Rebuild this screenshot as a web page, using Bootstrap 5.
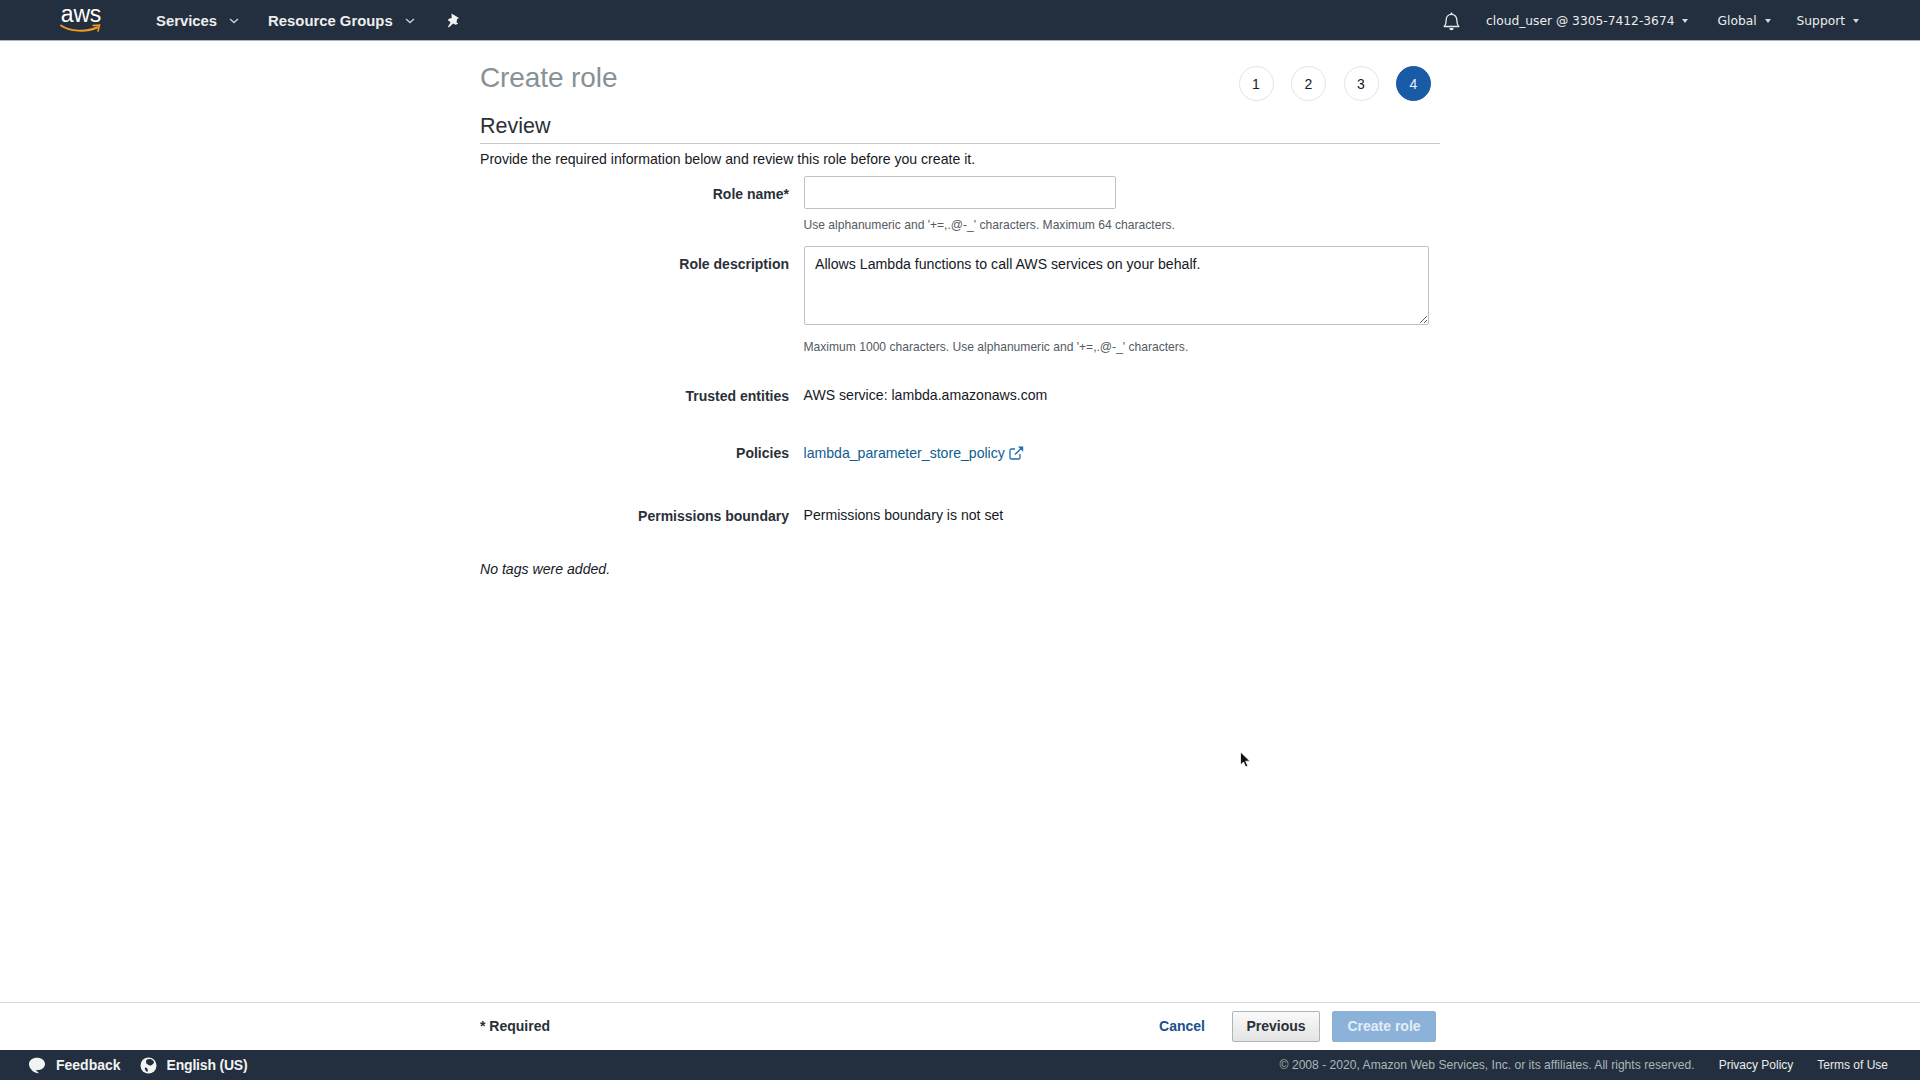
<!DOCTYPE html>
<html lang="en">
<head>
<meta charset="utf-8">
<title>Create role</title>
<link href="https://cdn.jsdelivr.net/npm/bootstrap@5.3.0/dist/css/bootstrap.min.css" rel="stylesheet">
<style>
html,body{height:100%}
body{font-family:"Liberation Sans",Arial,sans-serif;font-size:14.1px;color:#16191f;background:#fff;overflow:hidden}
.shell{height:1080px;position:relative}
.topbar{height:41px;background:#232f3e;border-bottom:1px solid #aab7b8;color:#fff;flex:none}
.logo-box{margin-left:60px;width:42px;height:33px;position:relative;margin-top:-1px}
.logo-word{font-size:23px;line-height:23px;letter-spacing:-.2px;color:#fff;text-align:center;display:block}
.logo-smile{position:absolute;left:0;top:20px}
.svc{font-weight:700;font-size:14.85px;color:#eee;position:relative;top:1px}
.svc-one{margin-left:54px}
.svc-two{margin-left:29px}
.chev{margin-left:12px;position:relative;top:1px}
.pin{margin-left:31px}
.acct{font-family:"DejaVu Sans",sans-serif;font-size:12.25px;color:#eaeded}
.tri{display:inline-block;width:0;height:0;border-left:3.5px solid transparent;border-right:3.5px solid transparent;border-top:4px solid #d5dbdb;margin-left:8px;vertical-align:2px}
.acct-list{margin-right:61px;gap:26px;position:relative;top:1px}
.acct-first{margin-right:3px}
.bell{margin-right:26px;position:relative;top:1px}
.content-col{width:960px;margin-left:480px}
.head-line{height:103px;border-bottom:1px solid #c9c9c9;position:relative}
.page-title{font-size:28px;font-weight:400;color:#879196;line-height:34px;margin:20px 0 0;letter-spacing:-.1px}
.page-sub{font-size:21.5px;font-weight:400;color:#2b3038;line-height:26px;margin:18px 0 0}
.steps{gap:17.5px;padding-right:9px;padding-top:25px}
.step-dot{width:35px;height:35px;border:1px solid #e1e4e6;border-radius:50%;font-size:14px;color:#16191f;line-height:1}
.step-on{background:#1a5ba8;border-color:#1a5ba8;color:#e8f1fa}
.intro{line-height:20px;margin:5px 0 0;color:#16191f}
.lbl{width:309px;margin-right:15px;text-align:right;font-weight:700;font-size:14px;flex:none;color:#2b3038}
.val{flex:1 1 auto;min-width:0}
.row-name{margin-top:7px}
.row-name .lbl{padding-top:9px;line-height:18px}
.fld-name{width:312px;height:33px;border:1px solid #bcc3c6;border-radius:2px;background:#fff;display:block}
.hint{font-size:12.08px;line-height:16px;color:#545b64;margin-left:-.5px}
.hint-a{margin-top:8px}
.row-desc{margin-top:13px}
.row-desc .lbl{padding-top:8px;line-height:20px}
.fld-desc{width:625px;height:79px;border:1px solid #bcc3c6;border-radius:2px;padding:7px 10px;font-size:14.15px;line-height:20px;color:#16191f;display:block;background:#fff;font-family:inherit}
.hint-b{margin-top:14px}
.row-plain{line-height:20px}
.row-plain .val{margin-left:-.5px}
.row-trust{margin-top:30px}
.row-pol{margin-top:37px}
.row-perm{margin-top:42px}
.row-perm .lbl,.row-trust .lbl{padding-top:1px}
.pol-link{color:#0f5d92;text-decoration:none}
.ext{margin-left:4px;vertical-align:-2px}
.no-tags{font-style:italic;margin:33px 0 0;line-height:20px}
.main-area{flex:1 1 auto;min-height:0}
.actbar{height:48px;border-top:1px solid #d5dbdb;flex:none}
.actbar-in{width:960px;margin-left:480px;padding-right:4px;height:100%}
.req{font-weight:700;font-size:14px;color:#2b3038}
.cancel-link{color:#1a4f8b;font-weight:700;font-size:14px;text-decoration:none;margin-right:27px}
.btn-prev{width:88px;height:31px;padding:0;font-size:14px;font-weight:700;color:#2b3038;border:1px solid #aab7b8;border-radius:2px;background:linear-gradient(#fafafa,#e4e4e4);margin-right:12px}
.btn-make{width:104px;height:31px;padding:0;font-size:14px;font-weight:700;color:#e4edf6;border:1px solid #8cb2da;border-radius:2px;background:#8cb2da}
.foot{height:30px;background:#232f3e;flex:none;padding:0 32px 0 28px}
.foot-left{font-weight:700;color:#f2f3f3;font-size:14px}
.foot-lang{letter-spacing:-.2px}
.foot-gap{margin-left:19px}
.foot-icon{margin-right:10px}
.copy{font-size:12.12px;color:#aab7b8;margin-right:24px}
.foot-link{font-size:12px;color:#eaeded;text-decoration:none}
.foot-link+.foot-link{margin-left:24px}
.cursor-mark{position:absolute;left:1239px;top:751px}
</style>
</head>
<body>
<div class="shell d-flex flex-column">
  <nav class="topbar d-flex align-items-center">
    <div class="logo-box">
      <span class="logo-word">aws</span>
      <svg class="logo-smile" width="42" height="12" viewBox="0 0 42 12"><path d="M1 2.500C10 8.500 26 9.500 37 4.500" fill="none" stroke="#f39c1f" stroke-width="2" stroke-linecap="round"/><path d="M33 2.500L39.500 2.200L38 8" fill="none" stroke="#f39c1f" stroke-width="1.600" stroke-linecap="round"/></svg>
    </div>
    <span class="svc svc-one">Services</span>
    <svg class="chev" width="10" height="6" viewBox="0 0 10 6"><path d="M1 1l4 3.500L9 1" fill="none" stroke="#c8cdd2" stroke-width="1.500"/></svg>
    <span class="svc svc-two">Resource Groups</span>
    <svg class="chev" width="10" height="6" viewBox="0 0 10 6"><path d="M1 1l4 3.500L9 1" fill="none" stroke="#c8cdd2" stroke-width="1.500"/></svg>
    <svg class="pin" width="14" height="15" viewBox="0 0 14 15"><path d="M5.500.5l7.500 4.500-1.900 1-.6 3.300 1.700 1.500-2.700.9-2.300-1.200L2.800 14.400l-.8-.6 2.600-4.600L1.900 7.300l.9-1.500 2.900-.9z" fill="#f2f3f3"/></svg>
    <div class="ms-auto d-flex align-items-center">
      <svg class="bell" width="17" height="19" viewBox="0 0 17 19"><path d="M1.200 14.500c1.600-1.600 2-3 2-6.500 0-3.200 2.200-5.600 5.300-5.600s5.300 2.400 5.300 5.600c0 3.500.4 4.900 2 6.500z" fill="none" stroke="#eaeded" stroke-width="1.300" stroke-linejoin="round"/><path d="M6.300 16h4.400a2.200 2.200 0 0 1-4.400 0z" fill="#eaeded"/><circle cx="8.500" cy="1.500" r="1" fill="#eaeded"/></svg>
      <div class="acct-list d-flex acct">
        <span class="acct-first">cloud_user @ 3305-7412-3674<i class="tri"></i></span>
        <span>Global<i class="tri"></i></span>
        <span>Support<i class="tri"></i></span>
      </div>
    </div>
  </nav>

  <main class="main-area">
    <div class="content-col">
      <div class="head-line d-flex justify-content-between">
        <div>
          <h1 class="page-title">Create role</h1>
          <h2 class="page-sub">Review</h2>
        </div>
        <div class="steps d-flex align-items-start">
          <div class="step-dot d-flex align-items-center justify-content-center">1</div>
          <div class="step-dot d-flex align-items-center justify-content-center">2</div>
          <div class="step-dot d-flex align-items-center justify-content-center">3</div>
          <div class="step-dot step-on d-flex align-items-center justify-content-center">4</div>
        </div>
      </div>
      <p class="intro">Provide the required information below and review this role before you create it.</p>

      <div class="d-flex row-name">
        <div class="lbl">Role name*</div>
        <div class="val">
          <input class="fld-name" type="text" aria-label="Role name">
          <div class="hint hint-a">Use alphanumeric and '+=,.@-_' characters. Maximum 64 characters.</div>
        </div>
      </div>
      <div class="d-flex row-desc">
        <div class="lbl">Role description</div>
        <div class="val">
          <textarea class="fld-desc" aria-label="Role description">Allows Lambda functions to call AWS services on your behalf.</textarea>
          <div class="hint hint-b">Maximum 1000 characters. Use alphanumeric and '+=,.@-_' characters.</div>
        </div>
      </div>
      <div class="d-flex row-plain row-trust">
        <div class="lbl">Trusted entities</div>
        <div class="val">AWS service: lambda.amazonaws.com</div>
      </div>
      <div class="d-flex row-plain row-pol">
        <div class="lbl">Policies</div>
        <div class="val"><a class="pol-link" href="#">lambda_parameter_store_policy</a><svg class="ext" width="15" height="14" viewBox="0 0 15 14"><path d="M11 8v3.600a1.400 1.400 0 0 1-1.400 1.400H2.400A1.400 1.400 0 0 1 1 11.600V4.400A1.400 1.400 0 0 1 2.400 3H6" fill="none" stroke="#1a6bb0" stroke-width="1.300"/><path d="M6 8.500L12.500 2" stroke="#1a6bb0" stroke-width="1.500" fill="none"/><path d="M9 .6h5.200v5.200z" fill="#1a6bb0"/></svg></div>
      </div>
      <div class="d-flex row-plain row-perm">
        <div class="lbl">Permissions boundary</div>
        <div class="val">Permissions boundary is not set</div>
      </div>
      <p class="no-tags">No tags were added.</p>
    </div>
  </main>

  <div class="actbar">
    <div class="actbar-in d-flex align-items-center">
      <span class="req">* Required</span>
      <a class="cancel-link ms-auto" href="#">Cancel</a>
      <button class="btn btn-prev" type="button">Previous</button>
      <button class="btn btn-make" type="button">Create role</button>
    </div>
  </div>

  <footer class="foot d-flex align-items-center">
    <svg class="foot-icon" width="18" height="17" viewBox="0 0 18 17"><path d="M9 .8c4.500 0 8 2.700 8 6.200s-3.500 6.200-8 6.200c-.5 0-1 0-1.400-.1L11 16.200c-3-.2-6-1.200-7.700-3.800C1.800 11.200 1 9.200 1 7 1 3.500 4.500.8 9 .8z" fill="#f2f3f3"/></svg>
    <span class="foot-left">Feedback</span>
    <svg class="foot-icon foot-gap" width="17" height="17" viewBox="0 0 17 17"><circle cx="8.500" cy="8.500" r="8" fill="#f2f3f3"/><path d="M7 2.500c2-1 5-.6 6.500 1.500.8 1.200.5 2.600-.8 3.200-1.200.5-1.500 1.600-2.700 1.400-1.400-.3-1.700-1.300-3-1.700C6 6.500 5.500 3.500 7 2.500zM5 10.500c1.300-.3 2.500.6 2.700 1.800.1 1 .3 2-.4 2.700C5.800 14.200 4.200 12 5 10.500z" fill="#232f3e"/></svg>
    <span class="foot-left foot-lang">English (US)</span>
    <span class="copy ms-auto">© 2008 - 2020, Amazon Web Services, Inc. or its affiliates. All rights reserved.</span>
    <a class="foot-link" href="#">Privacy Policy</a>
    <a class="foot-link" href="#">Terms of Use</a>
  </footer>

  <svg class="cursor-mark" width="13" height="18" viewBox="0 0 13 18"><path d="M1.500 1v13l3-3 2.200 5 2.200-1-2.200-4.800H11z" fill="#111" stroke="#fff" stroke-width=".8"/></svg>
</div>
<script src="https://cdn.jsdelivr.net/npm/bootstrap@5.3.0/dist/js/bootstrap.bundle.min.js"></script>
</body>
</html>
